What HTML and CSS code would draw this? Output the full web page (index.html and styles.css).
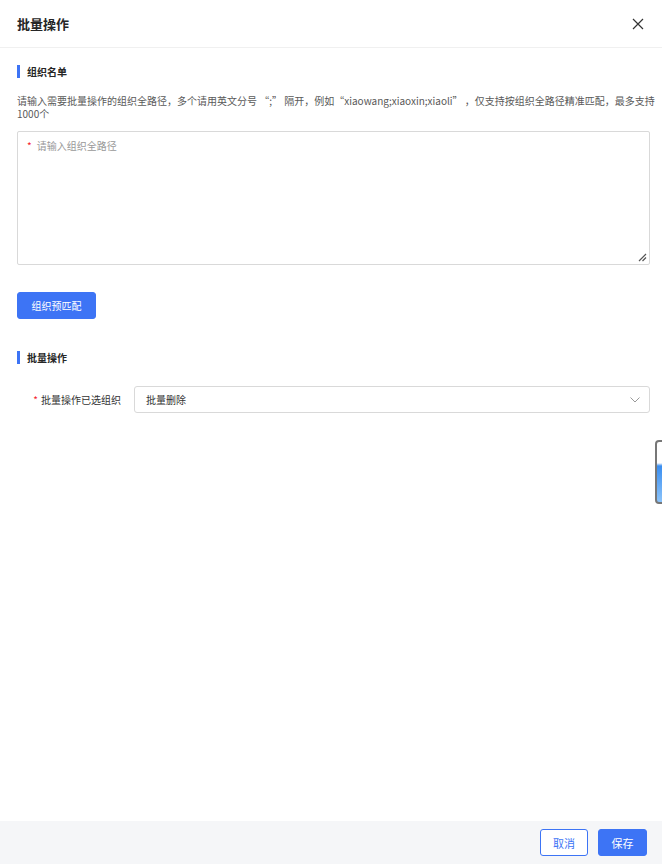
FILE: index.html
```html
<!DOCTYPE html>
<html lang="zh">
<head>
<meta charset="utf-8">
<link rel="stylesheet" href="styles.css">
</head>
<body>
<div class="dialog">
  <header class="head">
    <h1 class="title">批量操作</h1>
    <svg class="close" width="12" height="12" viewBox="0 0 12 12"><path d="M1 1L11 11M11 1L1 11" stroke="#333" stroke-width="1.2" fill="none"/></svg>
  </header>
  <main class="body">
    <h2 class="sec">组织名单</h2>
    <p class="desc">请输入需要批量操作的组织全路径，多个请用英文分号 “;” 隔开，例如“xiaowang;xiaoxin;xiaoli” ，仅支持按组织全路径精准匹配，最多支持1000个</p>
    <div class="textarea">
      <span class="req">*</span><span class="ph">请输入组织全路径</span>
      <svg class="grip" width="9" height="9" viewBox="0 0 9 9"><path d="M8 1L1 8M8 4.5L4.5 8" stroke="#555" stroke-width="1.2" fill="none"/></svg>
    </div>
    <button class="btn primary match">组织预匹配</button>
    <h2 class="sec sec2">批量操作</h2>
    <div class="row">
      <label class="lbl"><span class="req">*</span>批量操作已选组织</label>
      <div class="select">
        <span>批量删除</span>
        <svg width="10" height="6" viewBox="0 0 10 6"><path d="M0.5 0.5L5 5L9.5 0.5" stroke="#999" stroke-width="1" fill="none"/></svg>
      </div>
    </div>
  </main>
  <footer class="foot">
    <button class="btn ghost">取消</button>
    <button class="btn primary">保存</button>
  </footer>
  <div class="tab"></div>
</div>
</body>
</html>
```
FILE: styles.css
```css
* { box-sizing: border-box; }
html, body { margin: 0; padding: 0; }
body {
  width: 662px; height: 864px; overflow: hidden; background: #fff;
  font-family: "Noto Sans CJK SC", "Noto Sans", sans-serif;
  color: #333;
}
.dialog { position: relative; height: 864px; display: flex; flex-direction: column; }
.head {
  height: 48px; border-bottom: 1px solid #f0f0f0;
  display: flex; align-items: center; justify-content: space-between;
  padding: 0 18px 0 17px;
}
.title { margin: 0; font-size: 13px; font-weight: bold; color: #262626; line-height: 20px; }
.close { display: block; }
.body { flex: 1; padding: 17px 12px 0 17px; }
.sec {
  margin: 0; font-size: 10px; font-weight: bold; color: #262626;
  line-height: 13px; padding-left: 7px; border-left: 3px solid #3d74f5;
  height: 13px;
}
.desc {
  margin: 16px -8px 0 0; font-size: 10px; line-height: 13px; color: #595959;
}
.textarea {
  position: relative; margin-top: 11px; height: 134px; width: 633px;
  border: 1px solid #d9d9d9; border-radius: 2px; padding: 7px 9px;
  font-size: 10px; line-height: 14px;
}
.req { color: #f5222d; margin-right: 5px; font-size: 10px; }
.ph { color: #999; }
.grip { position: absolute; right: 2px; bottom: 2px; }
.btn {
  font-family: inherit; font-size: 10px; border-radius: 3px; height: 27px;
  padding: 0; cursor: pointer;
}
.primary { background: #3d74f5; border: 1px solid #3d74f5; color: #fff; }
.ghost { background: #fff; border: 1px solid #3d74f5; color: #3d74f5; }
.match { margin-top: 27px; width: 79px; display: block; }
.sec2 { margin-top: 32px; }
.row { display: flex; align-items: center; margin-top: 22px; }
.lbl {
  width: 117px; text-align: right; font-size: 10px; color: #333; padding-right: 13px;
  white-space: nowrap;
}
.lbl .req { margin-right: 3px; }
.select {
  flex: 1; height: 27px; border: 1px solid #d9d9d9; border-radius: 3px;
  display: flex; align-items: center; justify-content: space-between;
  padding: 0 9px 0 11px; font-size: 10px; color: #333;
}
.select svg { display: block; }
.foot {
  height: 43px; background: #f5f6f8; display: flex; justify-content: flex-end;
  align-items: center; gap: 10px; padding: 0 15px 0 0;
}
.foot .btn { font-size: 11px; }
.foot .ghost { width: 48px; }
.foot .primary { width: 49px; }
.tab {
  position: absolute; left: 655px; top: 440px; width: 14px; height: 64px;
  border: 2px solid #777; border-radius: 4px; background: linear-gradient(#fff 0, #fff 35%, #3a8ef0 40%, #8cc4fa 100%);
}
```
